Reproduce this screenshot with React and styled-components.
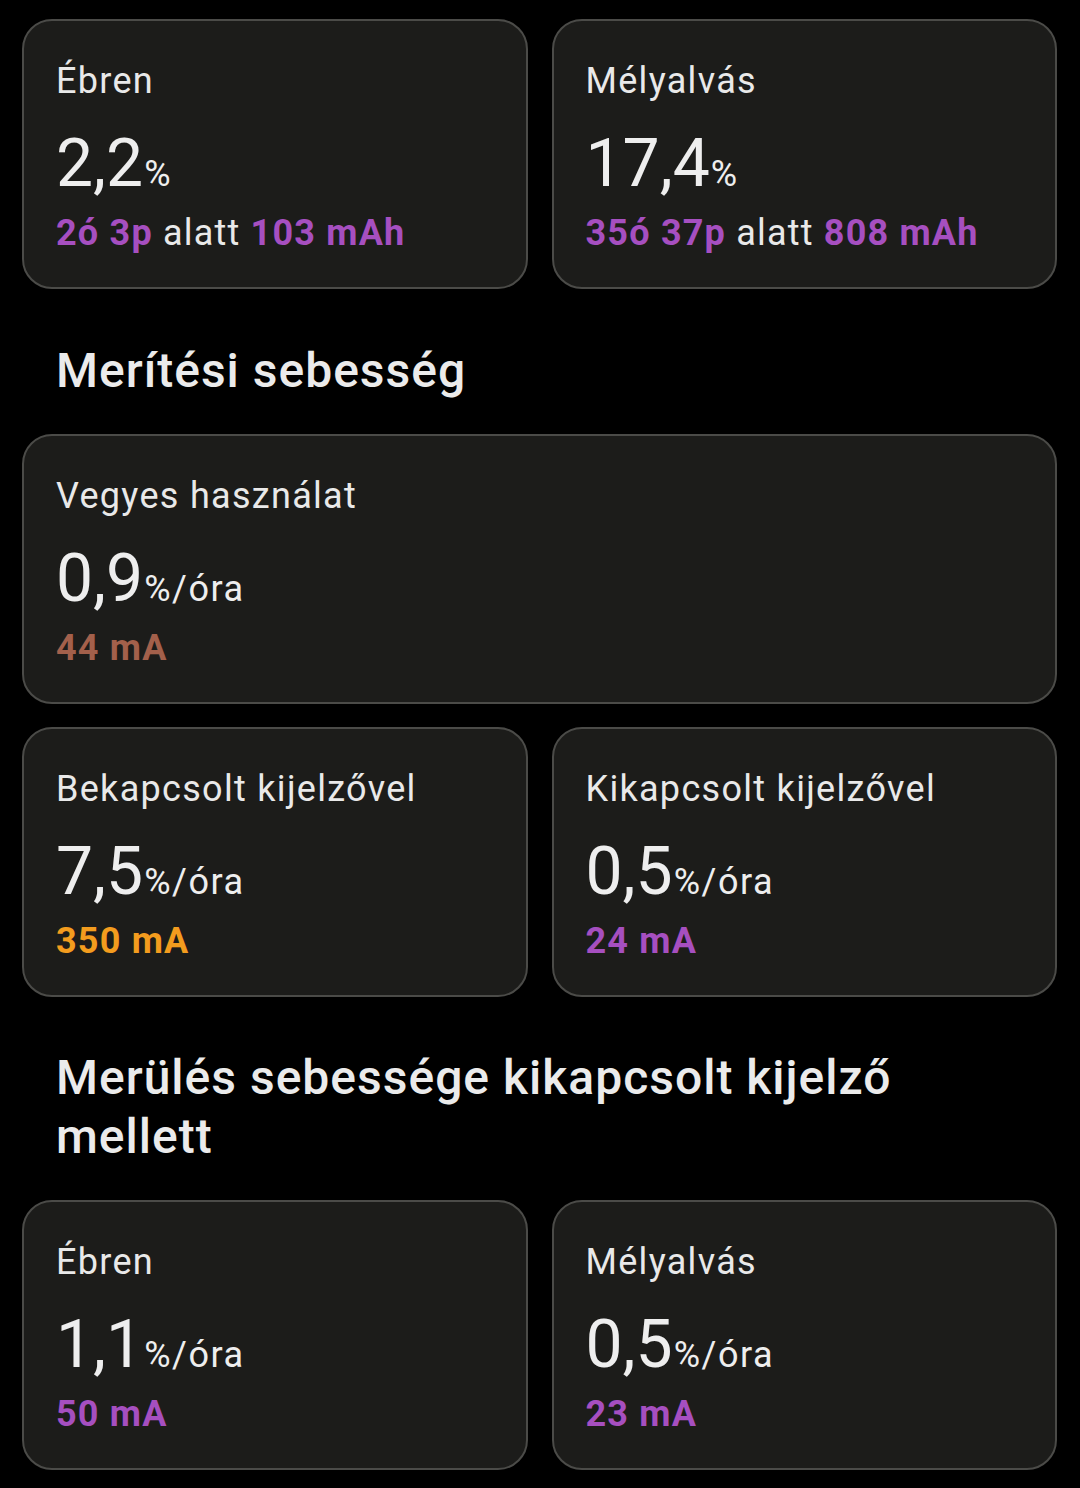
import React from "react";
import styled, { createGlobalStyle } from "styled-components";

const Global = createGlobalStyle`
  html, body { margin: 0; padding: 0; background: #000; }
  body { font-family: Roboto, "Noto Sans", "Liberation Sans", sans-serif; color: #ececec; }
  * { box-sizing: border-box; }
`;

const Page = styled.div`
  width: 1080px;
  min-height: 1488px;
  background: #000;
  padding: 19px 23px 18px 22px;
  display: flex;
  flex-direction: column;
`;

const Grid = styled.div`
  display: grid;
  grid-template-columns: ${(p) => (p.$single ? "1fr" : "1fr 1fr")};
  column-gap: 24px;
  row-gap: 23px;
  & + & { margin-top: 23px; }
`;

const Card = styled.div`
  height: 270px;
  background: #1c1c1a;
  border: 2px solid #4b4b48;
  border-radius: 30px;
  padding: 38px 32px 32px;
  display: flex;
  flex-direction: column;
`;

const Label = styled.div`
  font-size: 36px;
  line-height: 44px;
  font-weight: 400;
  letter-spacing: 1.3px;
  color: #e9e9e9;
  white-space: nowrap;
`;

const Value = styled.div`
  margin-top: 23px;
  font-size: 66px;
  line-height: 76px;
  font-weight: 400;
  color: #eeeeee;
  white-space: nowrap;
`;

const Unit = styled.span`
  font-size: 36px;
  line-height: 1;
  letter-spacing: 1.5px;
  margin-left: 1px;
`;

const Sub = styled.div`
  margin-top: 9px;
  font-size: 36px;
  line-height: 44px;
  font-weight: 400;
  letter-spacing: 1.2px;
  color: #e9e9e9;
  white-space: nowrap;
`;

const Hi = styled.span`
  font-weight: 700;
  color: ${(p) => p.$color || "#a64fc0"};
`;

const Heading = styled.h2`
  margin: 51.5px 0 34px;
  padding: 0 34px;
  font-size: 48px;
  line-height: 59px;
  font-weight: 500;
  letter-spacing: 1px;
  color: #ebebeb;
`;

const PURPLE = "#a64fc0";

function StatCard({ label, value, unit, children }) {
  return (
    <Card>
      <Label>{label}</Label>
      <Value>
        {value}
        <Unit>{unit}</Unit>
      </Value>
      <Sub>{children}</Sub>
    </Card>
  );
}

export default function App() {
  return (
    <>
      <Global />
      <Page>
        <Grid>
          <StatCard label="Ébren" value="2,2" unit="%">
            <Hi>2ó 3p</Hi> alatt <Hi>103 mAh</Hi>
          </StatCard>
          <StatCard label="Mélyalvás" value="17,4" unit="%">
            <Hi>35ó 37p</Hi> alatt <Hi>808 mAh</Hi>
          </StatCard>
        </Grid>

        <Heading>Merítési sebesség</Heading>

        <Grid $single>
          <StatCard label="Vegyes használat" value="0,9" unit="%/óra">
            <Hi $color="#a3604b">44 mA</Hi>
          </StatCard>
        </Grid>
        <Grid>
          <StatCard label="Bekapcsolt kijelzővel" value="7,5" unit="%/óra">
            <Hi $color="#f39c1e">350 mA</Hi>
          </StatCard>
          <StatCard label="Kikapcsolt kijelzővel" value="0,5" unit="%/óra">
            <Hi $color={PURPLE}>24 mA</Hi>
          </StatCard>
        </Grid>

        <Heading>Merülés sebessége kikapcsolt kijelző mellett</Heading>

        <Grid>
          <StatCard label="Ébren" value="1,1" unit="%/óra">
            <Hi $color={PURPLE}>50 mA</Hi>
          </StatCard>
          <StatCard label="Mélyalvás" value="0,5" unit="%/óra">
            <Hi $color={PURPLE}>23 mA</Hi>
          </StatCard>
        </Grid>
      </Page>
    </>
  );
}
